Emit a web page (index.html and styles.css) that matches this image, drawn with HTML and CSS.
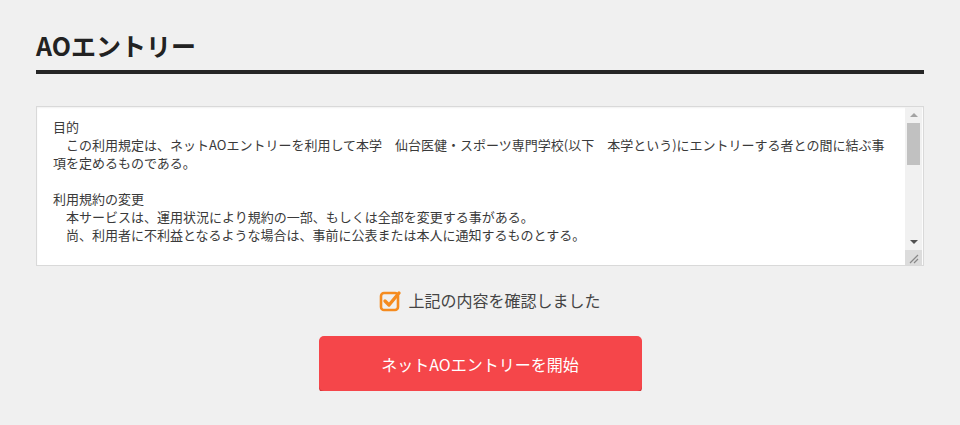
FILE: index.html
```html
<!DOCTYPE html>
<html lang="ja">
<head>
  <meta charset="UTF-8" />
  <meta name="viewport" content="width=device-width, initial-scale=1.0"/>
  <title>AOエントリー</title>
  <link rel="stylesheet" href="styles.css">
</head>
<body>
  <div class="wrap">
    <h1 class="page-title">AOエントリー</h1>

    <div class="terms">
      <div class="terms-text">
        目的<br>
        　この利用規定は、ネットAOエントリーを利用して本学　仙台医健・スポーツ専門学校(以下　本学という)にエントリーする者との間に結ぶ事<br>
        項を定めるものである。<br>
        <br>
        利用規約の変更<br>
        　本サービスは、運用状況により規約の一部、もしくは全部を変更する事がある。<br>
        　尚、利用者に不利益となるような場合は、事前に公表または本人に通知するものとする。
      </div>
      <div class="scrollbar">
        <div class="sb-btn sb-up"></div>
        <div class="sb-track"><div class="sb-thumb"></div></div>
        <div class="sb-btn sb-down"></div>
        <div class="resizer">
          <svg width="15" height="15" viewBox="0 0 15 15">
            <path d="M5 13 L13 5 M9 13 L13 9" stroke="#888" stroke-width="1.2" fill="none"/>
          </svg>
        </div>
      </div>
    </div>

    <label class="agree">
      <svg class="check" width="23" height="23" viewBox="0 0 23 23">
        <rect x="2" y="4" width="17" height="17" rx="3" fill="none" stroke="#f58b1f" stroke-width="2.6"/>
        <path d="M6 12 L10 16 L20 4" fill="none" stroke="#f58b1f" stroke-width="3.4" stroke-linecap="round" stroke-linejoin="round"/>
      </svg>
      <span>上記の内容を確認しました</span>
    </label>

    <div class="actions">
      <button class="start-btn">ネットAOエントリーを開始</button>
    </div>
  </div>
</body>
</html>
```

FILE: styles.css
```css
* { box-sizing: border-box; }
body {
  margin: 0;
  background: #f0f0f0;
  font-family: "Noto Sans CJK JP", "Noto Sans", sans-serif;
  color: #333;
}
.wrap {
  width: 888px;
  margin: 0 auto;
  padding-top: 27px;
}
.page-title {
  margin: 0;
  font-size: 25px;
  line-height: 36px;
  font-weight: bold;
  color: #222;
  padding-bottom: 7px;
  border-bottom: 4px solid #262626;
}
.terms {
  margin-top: 32px;
  height: 160px;
  background: #fff;
  border: 1px solid #d9d9d9;
  box-shadow: inset 0 1px 2px rgba(0,0,0,0.06);
  display: flex;
}
.terms-text {
  flex: 1;
  padding: 11px 16px 0 16px;
  font-size: 13px;
  line-height: 18px;
  color: #3a3a3a;
  white-space: nowrap;
  overflow: hidden;
}
.scrollbar {
  width: 17px;
  margin-right: 1px;
  display: flex;
  flex-direction: column;
  background: #f1f1f1;
}
.sb-btn {
  height: 16px;
  position: relative;
}
.sb-btn::after {
  content: "";
  position: absolute;
  left: 5px;
  width: 0;
  height: 0;
  border-left: 4px solid transparent;
  border-right: 4px solid transparent;
}
.sb-up::after { top: 6px; border-bottom: 4px solid #a3a3a3; }
.sb-down::after { top: 6px; border-top: 4px solid #505050; }
.sb-track {
  flex: 1;
  padding: 0 2px;
}
.sb-thumb {
  height: 42px;
  background: #c1c1c1;
}
.resizer {
  height: 15px;
  background: #dcdcdc;
}
.resizer svg { display: block; }
.agree {
  margin-top: 22px;
  padding-left: 20px;
  display: flex;
  justify-content: center;
  align-items: center;
  gap: 6px;
  font-size: 16px;
  line-height: 24px;
  color: #444;
}
.check { display: block; }
.actions {
  margin-top: 24px;
  display: flex;
  justify-content: center;
}
.start-btn {
  width: 323px;
  height: 55px;
  border: none;
  border-radius: 5px;
  background: #f5464a;
  box-shadow: 0 2px 0 #d2393c;
  color: #fff;
  font-family: "Noto Sans CJK JP", "Noto Sans", sans-serif;
  font-size: 16px;
  cursor: pointer;
}
```
